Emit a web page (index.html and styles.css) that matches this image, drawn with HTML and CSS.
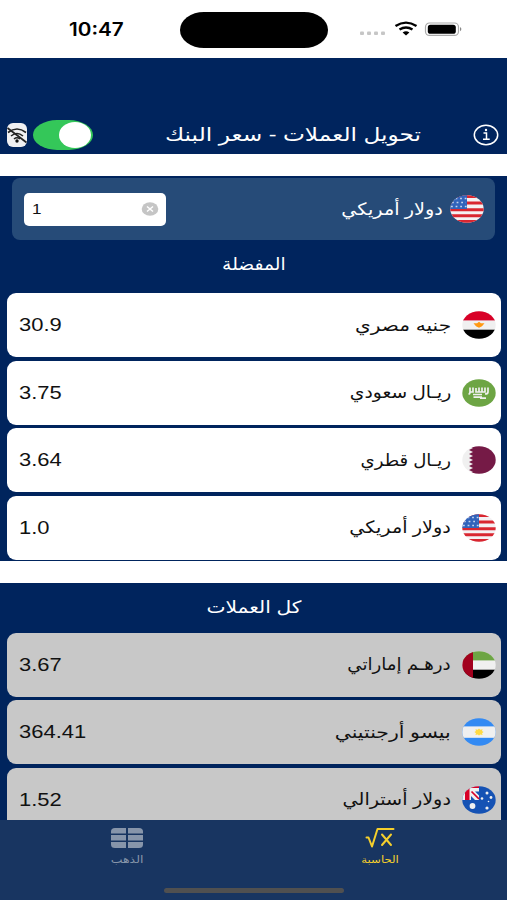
FILE: index.html
```
<!DOCTYPE html>
<html lang="ar" dir="rtl">
<head>
    <meta charset="UTF-8">
    <meta name="viewport" content="width=device-width, initial-scale=1.0">
    <title>تحويل العملات</title>
    <link rel="stylesheet" href="styles.css">
</head>
<body>

<!-- Shared flags -->
<svg class="defs" width="0" height="0">
    <symbol id="flag-us" viewBox="0 0 34 28" preserveAspectRatio="none">
        <clipPath id="round"><ellipse cx="17" cy="14" rx="16.7" ry="13.7"/></clipPath>
        <g clip-path="url(#round)">
            <rect width="34" height="28" fill="#f4f1f3"/>
            <path d="M0 1.5h34M0 8h34M0 14.7h34M0 20.700h34M0 26.500h34" stroke="#d92630" stroke-width="3"/>
            <rect width="17" height="14" fill="#3163bb"/>
            <path d="M5.500 3.500h11M2 7.500h14M1 11.500h16" stroke="#c3d3ee" stroke-width="1.600" stroke-dasharray="1.800 2.800"/>
        </g>
    </symbol>
</svg>

<div class="statusbar">
    <span class="time">10:47</span>
    <span class="island"></span>
    <span class="status-icons">
        <svg width="104" height="16" viewBox="0 0 104 16">
            <g fill="#c6c6c6">
                <rect x="1" y="10.5" width="4" height="3.5" rx="1"/><rect x="8" y="10.5" width="4" height="3.5" rx="1"/>
                <rect x="15" y="10.5" width="4" height="3.5" rx="1"/><rect x="22" y="10.5" width="4" height="3.5" rx="1"/>
            </g>
            <g fill="none" stroke="#000" stroke-width="2.4">
                <path d="M36.5 5Q47 -1.800 57.5 5"/>
                <path d="M40.500 8.600Q47 4.400 53.500 8.600"/>
            </g>
            <path d="M43.600 11.500Q47 9.200 50.400 11.500L47 14.500Z"/>
            <rect x="66.500" y="2" width="33" height="12.4" rx="4" fill="none" stroke="#aaa" stroke-width="1.2"/>
            <rect x="68.800" y="3.800" width="28" height="9" rx="2.6"/>
            <path d="M101 6q2.8 2.1 0 4.2z" fill="#888"/>
        </svg>
    </span>
</div>

<header class="header">
    <svg class="info" width="26" height="22" viewBox="0 0 26 22" fill="none" stroke="#fff">
        <ellipse cx="13" cy="11" rx="11.7" ry="9.8" stroke-width="1.5"/>
        <path d="M10.5 9h3v6M10 15.2h6.7" stroke-width="1.5"/>
        <circle cx="13" cy="6" r="1.2" fill="#fff" stroke="none"/>
    </svg>
    <h1><span class="txt w-title">تحويل العملات - سعر البنك</span></h1>
    <div class="switch"><span class="knob"></span></div>
    <svg class="offline" width="22" height="26" viewBox="0 0 22 26" fill="none" stroke="#222">
        <rect x="1" y="1" width="20" height="24" rx="6" fill="#f0f0f2" stroke="none"/>
        <path d="M2 10.500Q11 3.500 20 10.500M5 14Q11 9 17 14M8 17Q11 14.500 14 17" stroke-width="1.6"/>
        <path d="M1.5 6L20.5 20.5" stroke-width="1.7"/>
        <circle cx="11" cy="19" r="1.7" fill="#111" stroke="none"/>
    </svg>
</header>

<section class="favorites">
    <div class="base">
        <svg class="flag"><use href="#flag-us"/></svg>
        <span class="name"><span class="txt w-usd">دولار أمريكي</span></span>
        <div class="amount">
            <svg width="18" height="14" viewBox="0 0 18 14">
                <ellipse cx="9" cy="7" rx="8.3" ry="6.8" fill="#c5c5c5"/>
                <path d="M6 4.5l6 5M12 4.5l-6 5" stroke="#fff" stroke-width="1.5"/>
            </svg>
            <span class="num">1</span>
        </div>
    </div>

    <h2><span class="txt w-fav">المفضلة</span></h2>

    <div class="row">
        <svg class="flag" viewBox="0 0 34 28" preserveAspectRatio="none">
            <g clip-path="url(#round)">
                <rect width="34" height="28" fill="#f0f0f0"/>
                <rect width="34" height="9.4" fill="#d80027"/>
                <rect y="18.7" width="34" height="9.3" fill="#000"/>
                <path d="M11.5 12.2h3.6l1.9-1.4 1.9 1.4h3.6l-2.5 3-3 1.5-3-1.5z" fill="#ff9811"/>
            </g>
        </svg>
        <span class="name"><span class="txt w-egp">جنيه مصري</span></span>
        <span class="num">30.9</span>
    </div>
    <div class="row">
        <svg class="flag" viewBox="0 0 34 28" preserveAspectRatio="none">
            <g clip-path="url(#round)">
                <rect width="34" height="28" fill="#6da544"/>
                <path d="M8 8.500v4.500q0 2-1.500 2M11 8.500v4.500H8M14 9v4h3V8.500M17 13h3V8.500M20 13h3V8.500M26 8.500v4.500q0 2-3 2M11 15.500h9" fill="none" stroke="#f0f0f0" stroke-width="1.7"/>
                <path d="M11.500 18.200h8.500M18 19.200h6" stroke="#f0f0f0" stroke-width="1.800"/>
            </g>
        </svg>
        <span class="name"><span class="txt w-sar">ريـال سعودي</span></span>
        <span class="num">3.75</span>
    </div>
    <div class="row">
        <svg class="flag" viewBox="0 0 34 28" preserveAspectRatio="none">
            <g clip-path="url(#round)">
                <rect width="34" height="28" fill="#f0f0f0"/>
                <path d="M34 0H7l4 2-4 2 4 2-4 2 4 2-4 2 4 2-4 2 4 2-4 2 4 2-4 2 4 2-4 2h27z" fill="#751a46"/>
            </g>
        </svg>
        <span class="name"><span class="txt w-qar">ريـال قطري</span></span>
        <span class="num">3.64</span>
    </div>
    <div class="row">
        <svg class="flag"><use href="#flag-us"/></svg>
        <span class="name"><span class="txt w-usd">دولار أمريكي</span></span>
        <span class="num">1.0</span>
    </div>
</section>

<section class="all">
    <h2><span class="txt w-all">كل العملات</span></h2>

    <div class="row">
        <svg class="flag" viewBox="0 0 34 28" preserveAspectRatio="none">
            <g clip-path="url(#round)">
                <rect width="34" height="28" fill="#f0f0f0"/>
                <rect width="34" height="9.4" fill="#6da544"/>
                <rect y="18.7" width="34" height="9.3" fill="#000"/>
                <rect width="11" height="28" fill="#a2001d"/>
            </g>
        </svg>
        <span class="name"><span class="txt w-aed">درهـم إماراتي</span></span>
        <span class="num">3.67</span>
    </div>
    <div class="row">
        <svg class="flag" viewBox="0 0 34 28" preserveAspectRatio="none">
            <g clip-path="url(#round)">
                <rect width="34" height="28" fill="#338af3"/>
                <rect y="8.4" width="34" height="11.4" fill="#f0f0f0"/>
                <path d="M17 10.6l1.3 1.2 2.3-.5-.6 1.7 1.6 1.1-1.6 1.1.6 1.7-2.3-.4-1.3 1.1-1.3-1.1-2.3.4.6-1.7-1.6-1.1 1.6-1.1-.6-1.7 2.3.5z" fill="#ffda44"/>
            </g>
        </svg>
        <span class="name"><span class="txt w-ars">بيسو أرجنتيني</span></span>
        <span class="num">364.41</span>
    </div>
    <div class="row">
        <svg class="flag" viewBox="0 0 34 28" preserveAspectRatio="none">
            <g clip-path="url(#round)">
                <rect width="34" height="28" fill="#1552b4"/>
                <rect width="17" height="14" fill="#f0f0f0"/>
                <path d="M17 2h-9.500v12H3V0h14z" fill="#d80027"/>
                <path d="M9.500 5.500l7.500 7.500" stroke="#d80027" stroke-width="1.7"/>
                <path d="M13 5.500h4v4zM9 10v4h4z" fill="#1552b4"/>
                <g fill="#f0f0f0">
                    <circle cx="10.5" cy="20" r="2.9"/><circle cx="20" cy="12.5" r="1.3"/>
                    <circle cx="25" cy="7" r="1.5"/><circle cx="29" cy="11.5" r="1.4"/>
                    <circle cx="26.5" cy="15.5" r=".8"/><circle cx="25" cy="22" r="1.6"/>
                </g>
            </g>
        </svg>
        <span class="name"><span class="txt w-aud">دولار أسترالي</span></span>
        <span class="num">1.52</span>
    </div>
</section>

<nav class="tabbar">
    <a class="tab active">
        <svg width="30" height="22" viewBox="0 0 30 22" fill="none" stroke="#f5cf2c" stroke-width="2" stroke-linecap="round" stroke-linejoin="round">
            <path d="M1.500 10.500h2L7 19.500 12.500 2H28.500"/>
            <path d="M17 7.500L26 18M26 7.500L17 18"/>
        </svg>
        <span class="txt w-tab1">الحاسبة</span>
    </a>
    <a class="tab">
        <svg width="32" height="22" viewBox="0 0 32 22" fill="#8795aa">
            <path d="M4 1h11v5.500H0V4.500Q0 1 4 1zM17 1h11q4 0 4 3.500v2H17zM0 8h15v5.500H0zM17 8h15v5.500H17zM0 15h15v6H4q-4 0-4-3.500zM17 15h15v2.500q0 3.500-4 3.500H17z"/>
        </svg>
        <span class="txt w-tab2">الذهب</span>
    </a>
    <span class="home"></span>
</nav>

</body>
</html>
```

FILE: styles.css
```
* {
    box-sizing: border-box;
}
body {
    margin: 0;
    height: 900px;
    overflow: hidden;
    display: flex;
    flex-direction: column;
    background-color: #fff;
    font-family: "Liberation Sans", "DejaVu Sans", sans-serif;
}
.defs {
    position: absolute;
}

/* Status bar */
.statusbar {
    direction: ltr;
    flex: none;
    height: 58px;
    display: grid;
    grid-template-columns: 180px 148px 1fr;
    align-items: center;
}
.time {
    padding-left: 69px;
    font: 600 18px Inter, sans-serif;
    transform: scaleX(1.15);
    transform-origin: 69px 50%;
}
.island {
    height: 36px;
    border-radius: 24px / 18px;
    background-color: #000;
    margin-top: 1px;
}
.status-icons {
    padding-left: 31px;
    height: 16px;
}
.status-icons svg {
    display: block;
}

/* Header */
.header {
    flex: none;
    height: 96px;
    padding: 57px 8px 0 6px;
    display: flex;
    align-items: center;
    background-color: #00245d;
    color: #fff;
}
.header h1 {
    flex: 1;
    margin: 0 52px 0 0;
    font-size: 19px;
    font-weight: normal;
}
.switch {
    width: 60px;
    height: 30px;
    padding: 2px;
    border-radius: 24px / 15px;
    background-color: #34c759;
    margin-left: 5px;
}
.knob {
    display: block;
    width: 32px;
    height: 26px;
    border-radius: 50%;
    background-color: #fff;
}

/* Text is drawn slightly wide */
.txt {
    display: inline-block;
    white-space: nowrap;
    transform: scaleX(1.1);
    transform-origin: 100% 50%;
}
h2 .txt, .tab .txt {
    transform-origin: 50% 50%;
}
.w-title {
    transform: scaleX(1.225);
}
.w-usd {
    transform: scaleX(1.13);
}
.w-egp {
    transform: scaleX(1.185);
}
.w-qar {
    transform: scaleX(1.065);
}
.w-aed {
    transform: scaleX(1.07);
}
.w-ars {
    transform: scaleX(1.2);
}
.w-aud {
    transform: scaleX(1.13);
}
.w-all {
    transform: scaleX(1.19);
}
.w-tab1 {
    transform: scaleX(1.17);
}
.w-tab2 {
    transform: scaleX(1.25);
}

.favorites {
    flex: none;
    height: 385px;
    margin-top: 22px;
    padding: 2px 6px 0 7px;
    background-color: #00245d;
}
.all {
    flex: none;
    height: 237px;
    margin-top: 22px;
    padding: 0 6px 0 7px;
    overflow: hidden;
    background-color: #00245d;
}
h2 {
    margin: 0;
    height: 53px;
    line-height: 50px;
    text-align: center;
    color: #fff;
    font-size: 17px;
    font-weight: normal;
}
.all h2 {
    height: 49.5px;
}

.base {
    height: 62px;
    margin: 0 6px 0 5px;
    padding: 0 11px 0 12px;
    display: flex;
    align-items: center;
    border-radius: 8px;
    background-color: #264b78;
    color: #fff;
}
.flag {
    flex: none;
    width: 34px;
    height: 28px;
}
.name {
    flex: 1;
    padding-right: 7px;
    font-size: 17px;
}
.amount {
    width: 142px;
    height: 33px;
    padding: 0 7px 0 8px;
    display: flex;
    align-items: center;
    justify-content: space-between;
    border-radius: 5px;
    background-color: #fff;
}
.num {
    padding-top: 1px;
    color: #111;
    font-size: 18px;
    transform: scaleX(1.22);
    transform-origin: 0 50%;
}
.amount .num {
    padding-top: 0;
    font-size: 14px;
}

.row {
    height: 64px;
    margin-bottom: 3.6px;
    padding: 0 5px 0 12px;
    display: flex;
    align-items: center;
    border-radius: 9px;
    background-color: #fff;
    color: #111;
}
.row .name {
    padding-right: 11px;
}
.all .row {
    background-color: #c8c8c8;
}

/* Tab bar */
.tabbar {
    position: relative;
    flex: none;
    height: 80px;
    padding-top: 7px;
    display: grid;
    grid-template-columns: 1fr 1fr;
    background-color: #183561;
}
.tab {
    display: flex;
    flex-direction: column;
    align-items: center;
    gap: 5px;
    color: #8795aa;
    font-size: 10px;
}
.tab.active {
    color: #f5cf2c;
}
.home {
    position: absolute;
    left: 164px;
    bottom: 7px;
    width: 180px;
    height: 5px;
    border-radius: 3px;
    background-color: #505050;
}
```
